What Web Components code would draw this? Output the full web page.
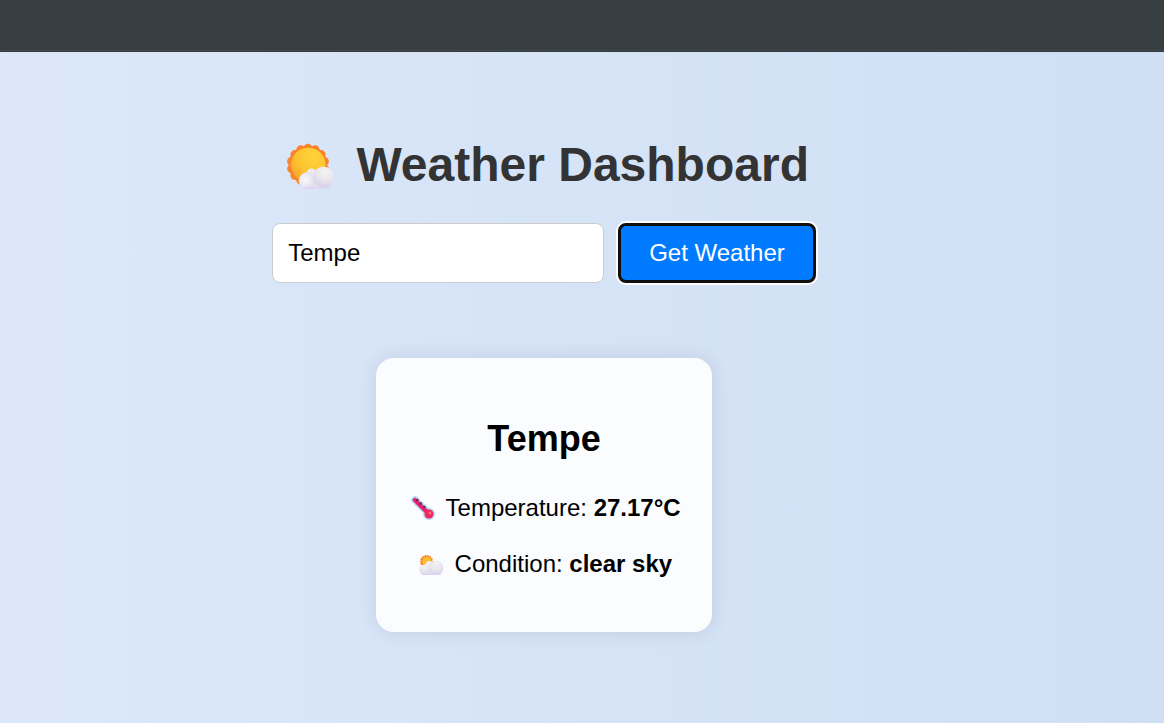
<!DOCTYPE html>
<html lang="en">
<head>
<meta charset="utf-8">
<title>Weather Dashboard</title>
<style>
body { margin: 0; font-family: "Liberation Sans", Arial, sans-serif; color: #000; }
</style>
</head>
<body>
<weather-app></weather-app>
<script>
const define = (name, html) => {
  const template = document.createElement('template');
  template.innerHTML = html;
  customElements.define(name, class extends HTMLElement {
    constructor() {
      super();
      this.attachShadow({ mode: 'open' }).append(template.content.cloneNode(true));
    }
  });
};

define('top-bar', `
<style>
:host { display: block; height: 52px; box-sizing: border-box; background: #363e41; border-bottom: 1px solid #343b3e; box-shadow: inset 0 -1px #48484a; }
</style>`);

define('sun-cloud-icon', `
<style>
:host { display: inline-block; width: 1em; height: 1em; }
svg { display: block; width: 100%; height: 100%; }
</style>
<svg viewBox="0 0 48 48" aria-hidden="true">
<defs>
<radialGradient id="sun" cx=".65" cy=".25" r=".8"><stop offset="0" stop-color="#ffd43a"/><stop offset=".6" stop-color="#fcc431"/><stop offset="1" stop-color="#f5a62c"/></radialGradient>
<radialGradient id="puff" cx=".6" cy=".25" r=".8"><stop offset="0" stop-color="#f4f4f5"/><stop offset=".55" stop-color="#e8e6ec"/><stop offset="1" stop-color="#d6cdec"/></radialGradient>
<radialGradient id="small" cx=".4" cy=".45" r=".65"><stop offset="0" stop-color="#f8f8f9"/><stop offset="1" stop-color="#dedae8"/></radialGradient>
</defs>
<circle cx="21" cy="23" r="19.400" fill="#fa842b"/>
<circle cx="21" cy="23" r="17" fill="none" stroke="#fa842b" stroke-width="8.600" stroke-linecap="round" pathLength="14" stroke-dasharray="0 1" transform="rotate(-90 21 23)"/>
<circle cx="21.300" cy="23" r="17.200" fill="url(#sun)"/>
<path d="M19 33h22v13.700H19z" fill="#e4e0ec"/>
<circle cx="24.500" cy="31.500" r="5" fill="#eceaf0"/>
<circle cx="20" cy="38.500" r="8.200" fill="url(#small)"/>
<circle cx="36.500" cy="34.800" r="10.400" fill="url(#puff)"/>
<path d="M15 45q2 1.700 5 1.700h19q3 0 6-3-15 2-30 1.300z" fill="#dcd2f3"/>
</svg>`);

define('cloudy-icon', `
<style>
:host { display: inline-block; width: 1em; height: 1em; }
svg { display: block; width: 100%; height: 100%; overflow: visible; }
</style>
<svg viewBox="0 0 24 24" aria-hidden="true">
<defs>
<radialGradient id="puff" cx=".5" cy=".2" r=".85"><stop offset="0" stop-color="#f3f2f5"/><stop offset=".55" stop-color="#e7e5ec"/><stop offset="1" stop-color="#d6ccf0"/></radialGradient>
</defs>
<circle cx="6.500" cy="9.500" r="5.600" fill="#f78b32" stroke="#f78b32" stroke-width="2.200" stroke-linecap="round" pathLength="14" stroke-dasharray="0 1"/>
<circle cx="6.800" cy="9.600" r="4.600" fill="#fcbd31"/>
<path d="M4 15h15v8H4z" fill="#e4dfee"/>
<circle cx="9.500" cy="13" r="4" fill="#efedf2"/>
<circle cx="4.500" cy="17.800" r="5.200" fill="url(#puff)"/>
<circle cx="16" cy="15.700" r="7.300" fill="url(#puff)"/>
<path d="M1.500 22q1.500 1 3 1h14q2 0 3.500-2-9 1.500-20.500 1z" fill="#dcd2f3"/>
</svg>`);

define('thermometer-icon', `
<style>
:host { display: inline-block; width: 1em; height: 1em; }
svg { display: block; width: 100%; height: 100%; }
</style>
<svg viewBox="0 0 24 24" aria-hidden="true" fill="none" stroke-linecap="round">
<path d="M4 4L16 15.500" stroke="#b5d8f6" stroke-width="7.500"/>
<circle cx="18" cy="18" r="6" fill="#b5d8f6"/>
<path d="M4 4L17 17" stroke="#e8226e" stroke-width="4.400"/>
<circle cx="18" cy="18" r="4.500" fill="#ef2762"/>
<circle cx="19" cy="17" r="1.500" fill="#ff6d7c"/>
<path d="M5.800 4.500L6.800 3.500M9.300 8L10.300 7M12.800 11.500L13.800 10.500" stroke="#402850" stroke-width="1.600"/>
</svg>`);

define('dashboard-title', `
<style>
:host { display: block; }
h1 { margin: 0; font-size: 48px; line-height: 56px; color: #333; text-align: center; }
sun-cloud-icon { margin: 0 8px; vertical-align: -9px; }
</style>
<h1><sun-cloud-icon></sun-cloud-icon> <slot></slot></h1>`);

define('city-search', `
<style>
:host { display: block; }
form { display: flex; justify-content: center; gap: 14px; margin: 0; }
input, button { box-sizing: border-box; height: 60px; margin: 0; font: 24px "Liberation Sans", Arial, sans-serif; border-radius: 8px; }
input { width: 332px; padding: 0 15px; color: #000; background: #fff; border: 1px solid #ccc; outline: none; }
button { padding: 0 28px; color: #fff; background: #007bff; border: 3px solid #101010; box-shadow: 0 0 0 2px #fff; cursor: pointer; white-space: nowrap; }
</style>
<form onsubmit="return false">
<input aria-label="City" type="text" value="Tempe">
<button type="submit">Get Weather</button>
</form>`);

define('weather-card', `
<style>
:host { display: block; width: fit-content; box-sizing: border-box; padding: 60px 31px 54px; background: rgba(255,255,255,.88); border-radius: 18px; box-shadow: 0 0 20px rgba(0,0,0,.1); text-align: center; }
h2 { margin: 0 0 34px; font-size: 36px; line-height: 42px; }
.rows { display: grid; gap: 28px; }
</style>
<h2><slot name="city"></slot></h2>
<div class="rows"><slot></slot></div>`);

define('weather-row', `
<style>
:host { display: block; font-size: 24px; line-height: 28px; white-space: nowrap; }
p { margin: 0; }
::slotted([slot=icon]) { margin: 0 4px; vertical-align: -4px; }
</style>
<p><slot name="icon"></slot> <slot name="label"></slot> <strong><slot></slot></strong></p>`);

define('weather-app', `
<style>
:host { display: flex; flex-direction: column; min-height: 100vh; background: linear-gradient(to right, #dce8fa, #d0dff4); }
main { display: flex; flex-direction: column; align-items: center; padding: 85px 76px 40px 0; }
city-search { margin: 30px 0 75px; }
</style>
<top-bar></top-bar>
<main>
<dashboard-title>Weather Dashboard</dashboard-title>
<city-search></city-search>
<weather-card>
<span slot="city">Tempe</span>
<weather-row><thermometer-icon slot="icon"></thermometer-icon><span slot="label">Temperature:</span>27.17°C</weather-row>
<weather-row><cloudy-icon slot="icon"></cloudy-icon><span slot="label">Condition:</span>clear sky</weather-row>
</weather-card>
</main>`);
</script>
</body>
</html>
